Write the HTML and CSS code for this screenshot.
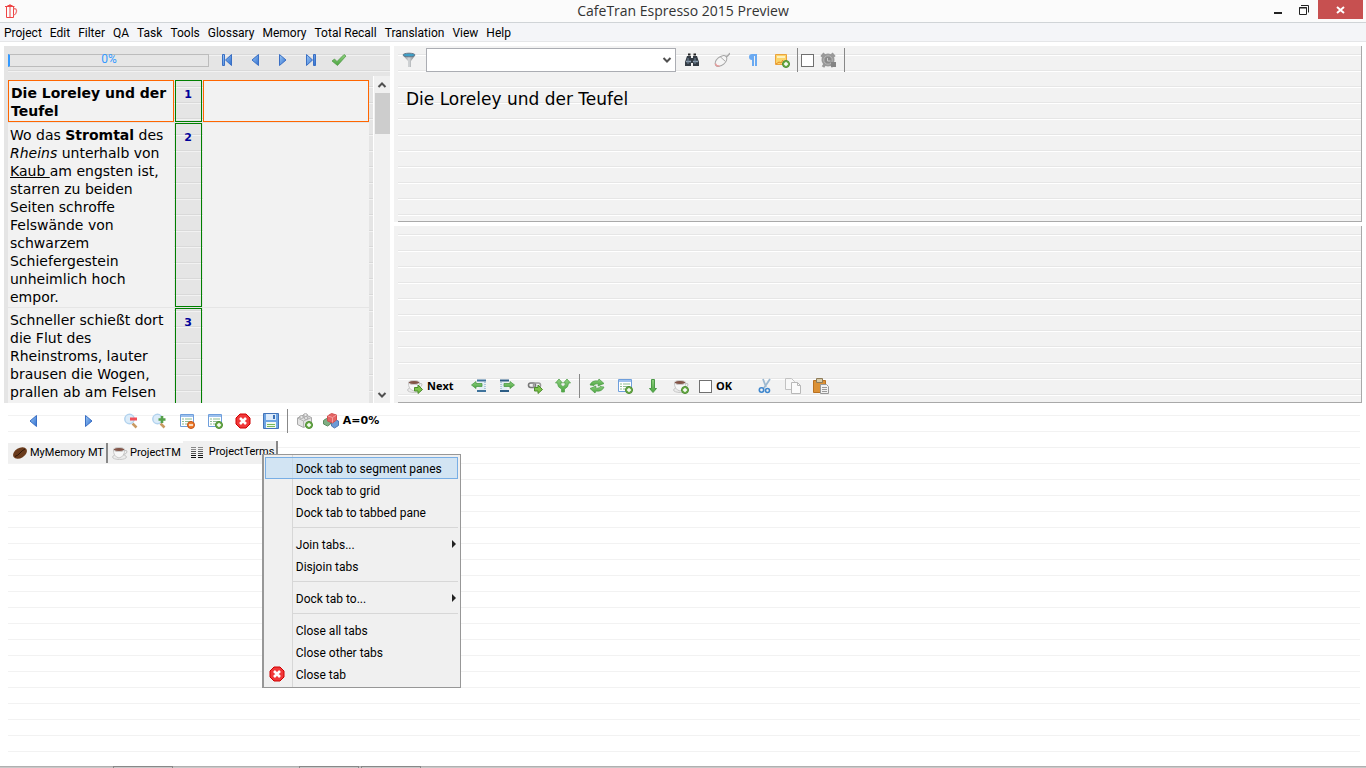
FILE: index.html
```
<!DOCTYPE html>
<html lang="en">
    <head>
        <meta charset="utf-8">
        <title>CafeTran Espresso 2015 Preview</title>
        <link rel="stylesheet" href="styles.css">
    </head>
    <body>
        <svg class="sprite" aria-hidden="true">
            <defs>
                <linearGradient id="blue" x1="0" x2="1" y1="0" y2="1">
                    <stop offset="0" stop-color="#9cc8f5"/>
                    <stop offset="1" stop-color="#2f6fd0"/>
                </linearGradient>
                <linearGradient id="green" x1="0" x2="0" y1="0" y2="1">
                    <stop offset="0" stop-color="#8ed07f"/>
                    <stop offset="1" stop-color="#4ba53f"/>
                </linearGradient>
                <linearGradient id="steel" x1="0" x2="1">
                    <stop offset="0" stop-color="#7b7f83"/>
                    <stop offset=".5" stop-color="#d5d8da"/>
                    <stop offset="1" stop-color="#6d7175"/>
                </linearGradient>
                <symbol id="plus" viewBox="0 0 16 16">
                    <circle cx="12" cy="12" r="3.5" fill="#6fb04c" stroke="#4a8a30"/>
                    <path d="M12 10v4M10 12h4" stroke="#fff" stroke-width="1.4"/>
                </symbol>
                <symbol id="go" viewBox="0 0 16 16">
                    <path d="M7.500 9.500h3.500V7l4.500 4.500-4.500 4v-2.500h-3.500z" fill="#7cc34a" stroke="#4b8c2b"/>
                </symbol>
                <symbol id="prev" viewBox="0 0 16 16">
                    <path d="M11.500 2.500v11L5 8z" fill="url(#blue)" stroke="#3a6fc4"/>
                </symbol>
                <symbol id="next" viewBox="0 0 16 16">
                    <path d="M4.500 2.500v11L11 8z" fill="url(#blue)" stroke="#3a6fc4"/>
                </symbol>
                <symbol id="first" viewBox="0 0 16 16">
                    <path d="M3.500 2.500h2v11h-2zM12.500 2.500v11L6.500 8z" fill="url(#blue)" stroke="#3a6fc4"/>
                </symbol>
                <symbol id="last" viewBox="0 0 16 16">
                    <path d="M10.500 2.500h2v11h-2zM3.500 2.500v11L9.500 8z" fill="url(#blue)" stroke="#3a6fc4"/>
                </symbol>
                <symbol id="check" viewBox="0 0 16 16">
                    <path d="M1 9l2.500-2 2.500 2.500L13 2.500l2 1.500-8.500 9.500z" fill="url(#green)" stroke="#4a9440" stroke-width=".7"/>
                </symbol>
                <symbol id="funnel" viewBox="0 0 16 16">
                    <path d="M2 3.500L7 9v6h3V9l4-5.500z" fill="url(#steel)"/>
                    <ellipse cx="8" cy="3" rx="6" ry="1.800" fill="#3d9fc7" stroke="#678"/>
                </symbol>
                <symbol id="binoculars" viewBox="0 0 16 16">
                    <path d="M3 4h4v2h2V4h4l2 6v4H9v-3H7v3H1v-4z" fill="#333b44"/>
                    <path d="M4 2.500h2.500M9.500 2.500H12" stroke="#222" stroke-width="2"/>
                    <path d="M2 9.500h5M9 9.500h5" stroke="#8fa2b4" stroke-width="1.500"/>
                    <path d="M4 6v6M11 6v6" stroke="#718496"/>
                </symbol>
                <symbol id="mouse" viewBox="0 0 16 16">
                    <path d="M11 5q3-.5 5-4" fill="none" stroke="#aaa" stroke-width="1.500"/>
                    <ellipse cx="7" cy="9" rx="6.800" ry="4.200" transform="rotate(-40 7 9)" fill="#f5f5f5" stroke="#a5a5a5"/>
                    <path d="M6 4.500l5.500 5" stroke="#aaa"/>
                    <path d="M1.500 11.500q.5 3 4 2.500" fill="none" stroke="#e59a9a" stroke-width="1.500"/>
                </symbol>
                <symbol id="pilcrow" viewBox="0 0 16 16">
                    <path d="M13 2H8Q5 2 5 5t3 3v6h2V4h1v10h2z" fill="#6aaaf2"/>
                </symbol>
                <symbol id="note" viewBox="0 0 16 16">
                    <path d="M1.500 2.500h11v10h-11z" fill="#fbd56b" stroke="#eba23c"/>
                    <path d="M3 4h8v2H3z" fill="#fff0bd"/>
                    <path d="M2 12l3-2 2 1 2-3" fill="none" stroke="#e58d25"/>
                    <use href="#plus"/>
                </symbol>
                <symbol id="alarm" viewBox="0 0 16 16">
                    <path d="M1.500 5l3-3.500M14.500 5l-3-3.500M3 15l2-3M13 15l-2-3" stroke="#999" stroke-width="3"/>
                    <circle cx="8" cy="8" r="6.500" fill="#999"/>
                    <circle cx="8" cy="8" r="4.200" fill="#8a8a8a" stroke="#bbb"/>
                    <path d="M7.500 6v3h3" fill="none" stroke="#ccc"/>
                    <path d="M11 10h5v5h-5z" fill="#858585"/>
                </symbol>
                <symbol id="cup" viewBox="0 0 16 16">
                    <ellipse cx="7.500" cy="12" rx="7" ry="2.500" fill="#ececec" stroke="#c8c8c8"/>
                    <path d="M1.500 4.500h11q.5 7-5.500 8.500-6-1.500-5.500-8.500z" fill="#f7f7f7" stroke="#c8c8c8"/>
                    <path d="M12.500 5.500q3-.5 2.500 1.500t-3.500 2.500" fill="none" stroke="#c0c0c0"/>
                    <ellipse cx="7" cy="4.500" rx="5.500" ry="2" fill="#835548" stroke="#d0d0d0"/>
                </symbol>
                <symbol id="cup-go" viewBox="0 0 16 16">
                    <use href="#cup"/>
                    <use href="#go"/>
                </symbol>
                <symbol id="cup-add" viewBox="0 0 16 16">
                    <use href="#cup"/>
                    <use href="#plus"/>
                </symbol>
                <symbol id="doc-left" viewBox="0 0 16 16">
                    <path d="M6 2.500h9M6 13h9" stroke="#3f739c" stroke-width="2"/>
                    <path d="M8 4h6v8H8z" fill="#e4eef5"/>
                    <path d="M14 4v8" stroke="#6f9fc0" stroke-dasharray="1 1"/>
                    <path d="M.5 7L5 3.500v2h6v3H5v2z" fill="url(#green)" stroke="#4c9a47" stroke-width=".8"/>
                </symbol>
                <symbol id="doc-right" viewBox="0 0 16 16">
                    <path d="M1 2.500h9M1 13h9" stroke="#2d5d85" stroke-width="2"/>
                    <path d="M2 4h6v8H2z" fill="#e4eef5"/>
                    <path d="M2 4v8" stroke="#6f9fc0" stroke-dasharray="1 1"/>
                    <path d="M15.500 7L11 3.500v2H5v3h6v2z" fill="url(#green)" stroke="#4c9a47" stroke-width=".8"/>
                </symbol>
                <symbol id="link" viewBox="0 0 16 16">
                    <rect x="1.500" y="5" width="7" height="4.500" rx="2.200" fill="none" stroke="#777" stroke-width="1.600"/>
                    <rect x="6.500" y="5" width="7" height="4.500" rx="2.200" fill="none" stroke="#999" stroke-width="1.600"/>
                    <use href="#go"/>
                </symbol>
                <symbol id="fork" viewBox="0 0 16 16">
                    <path d="M.5 5L4 1l3.500 4h-2q0 3 2.500 3.500Q10.500 8 10.500 5h-2L12 1l3.500 4h-2q0 4.500-4 6v3h-3v-3q-4-1.500-4-6z" fill="url(#green)" stroke="#58a552" stroke-width=".8"/>
                </symbol>
                <symbol id="refresh" viewBox="0 0 16 16">
                    <path d="M1 7q2-5 8-4l1-2 5 4.500L9 8l.5-2Q6 5 5 7.500z" fill="url(#green)" stroke="#4b9946" stroke-width=".7"/>
                    <path d="M15 9q-2 5-8 4l-1 2-5-4.500L7 8l-.5 2q3.500 1 4.500-1.500z" fill="url(#green)" stroke="#4b9946" stroke-width=".7"/>
                </symbol>
                <symbol id="table" viewBox="0 0 16 16">
                    <path d="M1.500 1.500h13v12h-13z" fill="#fff" stroke="#6f9fdc"/>
                    <path d="M2 3h12" stroke="#9cc0ed" stroke-width="2"/>
                    <path d="M3 6h2M6 6h7M3 8.500h2M6 8.500h7M3 11h2M6 11h6" stroke="#8dbd91"/>
                </symbol>
                <symbol id="table-add" viewBox="0 0 16 16">
                    <use href="#table"/>
                    <use href="#plus"/>
                </symbol>
                <symbol id="table-del" viewBox="0 0 16 16">
                    <use href="#table"/>
                    <circle cx="12" cy="12" r="3.500" fill="#ef7d2b" stroke="#c3521a"/>
                    <path d="M10 12h4" stroke="#fff" stroke-width="1.400"/>
                </symbol>
                <symbol id="down" viewBox="0 0 16 16">
                    <path d="M6.500 1.500h3v9h2l-3.500 4-3.500-4h2z" fill="url(#green)" stroke="#4b9946"/>
                </symbol>
                <symbol id="cut" viewBox="0 0 16 16">
                    <path d="M6 1l3 8M13 1L7 10" stroke="#9cb8d0" stroke-width="1.800"/>
                    <circle cx="4.500" cy="12" r="2.200" fill="none" stroke="#3f87ce" stroke-width="1.600"/>
                    <circle cx="10.500" cy="12.500" r="2" fill="none" stroke="#3f87ce" stroke-width="1.600"/>
                </symbol>
                <symbol id="copy" viewBox="0 0 16 16">
                    <path d="M.5.5h6l3 3v8h-9z" fill="#f8f8f8" stroke="#c2c2c2"/>
                    <path d="M6.500 4.500h6l3 3v8h-9z" fill="#fbfbfb" stroke="#b8b8b8"/>
                    <path d="M12.500 4.500v3h3" fill="none" stroke="#b8b8b8"/>
                </symbol>
                <symbol id="paste" viewBox="0 0 16 16">
                    <path d="M.5 2.500h12v12H.5z" fill="#db9136" stroke="#b97121"/>
                    <path d="M3.500.5h6v4h-6z" fill="#d8cba8" stroke="#8e7b58"/>
                    <path d="M7.500 6.500h6l2 2v7h-8z" fill="#f2f2f2" stroke="#999"/>
                    <path d="M9 9.500h5M9 11.500h5M9 13.500h5" stroke="#999"/>
                </symbol>
                <symbol id="lens" viewBox="0 0 16 16">
                    <path d="M9.500 10.500l4 4" stroke="#c99a62" stroke-width="2.500"/>
                    <circle cx="6.500" cy="6" r="4.700" fill="#dcecf9" stroke="#b3d3ee" stroke-width="1.500"/>
                </symbol>
                <symbol id="zoom-out" viewBox="0 0 16 16">
                    <use href="#lens"/>
                    <path d="M7 6h7" stroke="#f0505a" stroke-width="3"/>
                </symbol>
                <symbol id="zoom-in" viewBox="0 0 16 16">
                    <use href="#lens"/>
                    <path d="M7.500 6.500h7M11 3v7" stroke="#55a04a" stroke-width="2.600"/>
                </symbol>
                <symbol id="close" viewBox="0 0 16 16">
                    <path d="M5 1h6l4 4v6l-4 4H5l-4-4V5z" fill="#f0383a" stroke="#d00000"/>
                    <path d="M5 5l6 6M11 5l-6 6" stroke="#fff" stroke-width="2.600"/>
                </symbol>
                <symbol id="save" viewBox="0 0 16 16">
                    <path d="M.5.5h15v15H.5z" fill="#6ea5e4" stroke="#4474b8"/>
                    <path d="M3 1h10v6H3z" fill="#dcebfb"/>
                    <path d="M10 2h2v4h-2z" fill="#3d70b4"/>
                    <path d="M3 9h10v6H3z" fill="#f2f8ef"/>
                    <path d="M4 11.500h8M4 13.500h8" stroke="#77b85a"/>
                </symbol>
                <symbol id="brick" viewBox="0 0 16 16">
                    <path d="M.5 5l7-3.500 7 3v6L6.500 14.500l-6-3z" fill="#e4e4e4" stroke="#a8a8a8"/>
                    <path d="M.5 5l6 3 8-3.500M6.500 8v6.500" fill="none" stroke="#b4b4b4"/>
                    <ellipse cx="4.500" cy="4" rx="2" ry="1.300" fill="#f8f8f8" stroke="#a5a5a5"/>
                    <ellipse cx="9" cy="5" rx="2" ry="1.300" fill="#f8f8f8" stroke="#a5a5a5"/>
                    <ellipse cx="8.500" cy="2" rx="2" ry="1.300" fill="#f8f8f8" stroke="#a5a5a5"/>
                    <use href="#plus"/>
                </symbol>
                <symbol id="cubes" viewBox="0 0 16 16">
                    <path d="M.5 7.500l3-2 4 1.500v4l-3 2-4-2z" fill="#7fae83" stroke="#5b8a60"/>
                    <path d="M8.500 8.500l3-2 4 1.500v4.500l-4 2.500-3-2z" fill="#6e9bd6" stroke="#4f7ab5"/>
                    <path d="M4.500 3l4-2.500 5 1.500v5l-4 3-5-2z" fill="#e56565" stroke="#d05050"/>
                    <path d="M5 3l4.500 1.500v5M9.500 4.500l4-2.500" fill="none" stroke="#f3a0a0"/>
                </symbol>
                <symbol id="bean" viewBox="0 0 16 16">
                    <ellipse cx="8" cy="8" rx="7.500" ry="5" transform="rotate(-32 8 8)" fill="#6a3b1c"/>
                    <path d="M3 11.500q3-1 5-3.500t5-4" fill="none" stroke="#2f1607"/>
                </symbol>
                <symbol id="columns" viewBox="0 0 16 16">
                    <path d="M2 3.500h5M9 3.500h5M2 5.500h5M9 5.500h5" stroke="#888"/>
                    <path d="M2 7.500h5M9 7.500h5M2 9.500h5M9 9.500h5" stroke="#555"/>
                    <path d="M2 11.500h5M9 11.500h5M2 13.500h5M9 13.500h5" stroke="#111"/>
                </symbol>
                <symbol id="pot" viewBox="0 0 16 16">
                    <path d="M2 3.500h9.500M3.500 4v10.500h7V4M7 1v13M4.500 2.500h5" fill="none" stroke="#ee4444"/>
                    <path d="M10.500 5.500q3.500 0 3 3t-3 3.500" fill="none" stroke="#ee7777" stroke-width="1.300"/>
                </symbol>
                <symbol id="chevron" viewBox="0 0 16 16">
                    <path d="M4.500 6L8 9.500 11.500 6" fill="none" stroke="#505050" stroke-width="2"/>
                </symbol>
            </defs>
        </svg>

        <header class="titlebar">
            <svg class="icon logo"><use href="#pot"/></svg>
            <h1>CafeTran Espresso 2015 Preview</h1>
            <div class="window-buttons">
                <button class="win" aria-label="Minimize">
                    <svg class="icon"><path d="M3 11h8" stroke="#222" stroke-width="2"/></svg>
                </button>
                <button class="win" aria-label="Restore">
                    <svg class="icon"><path d="M2.500 5.500h7v7h-7zM2 6h8M4 3.500h7.500v7" fill="none" stroke="#222"/></svg>
                </button>
                <button class="win win-close" aria-label="Close">
                    <svg class="icon"><path d="M5 5l7 6M12 5l-7 6" stroke="#fff" stroke-width="2"/></svg>
                </button>
            </div>
        </header>

        <nav class="menubar">
            <button>Project</button>
            <button>Edit</button>
            <button>Filter</button>
            <button>QA</button>
            <button>Task</button>
            <button>Tools</button>
            <button>Glossary</button>
            <button>Memory</button>
            <button>Total Recall</button>
            <button>Translation</button>
            <button>View</button>
            <button>Help</button>
        </nav>

        <main class="workspace">
            <div class="editor">
                <section class="pane pane-grid">
                    <div class="toolbar">
                        <div class="progress" role="progressbar" aria-valuenow="0">0%</div>
                        <button class="tool" aria-label="First segment"><svg class="icon"><use href="#first"/></svg></button>
                        <button class="tool" aria-label="Previous segment"><svg class="icon"><use href="#prev"/></svg></button>
                        <button class="tool" aria-label="Next segment"><svg class="icon"><use href="#next"/></svg></button>
                        <button class="tool" aria-label="Last segment"><svg class="icon"><use href="#last"/></svg></button>
                        <button class="tool" aria-label="Finish"><svg class="icon"><use href="#check"/></svg></button>
                    </div>
                    <div class="segments">
                        <div class="segments-view">
                            <table>
                                <tr class="current">
                                    <td class="source"><b>Die Loreley und der Teufel</b></td>
                                    <th class="number">1</th>
                                    <td class="target"></td>
                                </tr>
                                <tr>
                                    <td class="source">Wo das <b>Stromtal</b> des <i>Rheins</i> unterhalb von <u>Kaub </u>am engsten ist, starren zu beiden Seiten schroffe Felswände von schwarzem Schiefergestein unheimlich hoch empor.</td>
                                    <th class="number">2</th>
                                    <td class="target"></td>
                                </tr>
                                <tr class="last">
                                    <td class="source">Schneller schießt dort die Flut des Rheinstroms, lauter brausen die Wogen, prallen ab am Felsen</td>
                                    <th class="number">3</th>
                                    <td class="target"></td>
                                </tr>
                            </table>
                        </div>
                        <div class="scrollbar">
                            <svg class="icon flip"><use href="#chevron"/></svg>
                            <div class="thumb"></div>
                            <svg class="icon"><use href="#chevron"/></svg>
                        </div>
                    </div>
                </section>

                <div class="segment-panes">
                    <section class="pane pane-segment pane-source">
                        <div class="toolbar">
                            <button class="tool" aria-label="Filter"><svg class="icon"><use href="#funnel"/></svg></button>
                            <div class="combo">
                                <select aria-label="Search text"><option></option></select>
                                <svg class="icon combo-arrow"><use href="#chevron"/></svg>
                            </div>
                            <button class="tool tool-wide" aria-label="Find"><svg class="icon"><use href="#binoculars"/></svg></button>
                            <button class="tool tool-wide" aria-label="Clear"><svg class="icon"><use href="#mouse"/></svg></button>
                            <button class="tool tool-wide" aria-label="Show marks"><svg class="icon"><use href="#pilcrow"/></svg></button>
                            <button class="tool tool-wide" aria-label="Add note"><svg class="icon"><use href="#note"/></svg></button>
                            <span class="divider"></span>
                            <label class="tick"><input type="checkbox" aria-label="Timer"></label>
                            <button class="tool" aria-label="Timer settings"><svg class="icon"><use href="#alarm"/></svg></button>
                            <span class="divider"></span>
                        </div>
                        <p class="source-text">Die Loreley und der Teufel</p>
                    </section>

                    <section class="pane pane-segment pane-target">
                        <div class="toolbar">
                            <button class="tool tool-next"><svg class="icon"><use href="#cup-go"/></svg>Next</button>
                            <button class="tool" aria-label="Source to left"><svg class="icon"><use href="#doc-left"/></svg></button>
                            <button class="tool" aria-label="Source to right"><svg class="icon"><use href="#doc-right"/></svg></button>
                            <button class="tool" aria-label="Join"><svg class="icon"><use href="#link"/></svg></button>
                            <button class="tool" aria-label="Split"><svg class="icon"><use href="#fork"/></svg></button>
                            <span class="divider"></span>
                            <button class="tool" aria-label="Refresh"><svg class="icon"><use href="#refresh"/></svg></button>
                            <button class="tool" aria-label="Add term"><svg class="icon"><use href="#table-add"/></svg></button>
                            <button class="tool" aria-label="Transfer"><svg class="icon"><use href="#down"/></svg></button>
                            <button class="tool" aria-label="Add to memory"><svg class="icon"><use href="#cup-add"/></svg></button>
                            <label class="tick tick-ok"><input type="checkbox">OK</label>
                            <button class="tool" aria-label="Cut"><svg class="icon"><use href="#cut"/></svg></button>
                            <button class="tool" aria-label="Copy"><svg class="icon"><use href="#copy"/></svg></button>
                            <button class="tool" aria-label="Paste"><svg class="icon"><use href="#paste"/></svg></button>
                        </div>
                    </section>
                </div>
            </div>

            <section class="resources">
                <div class="toolbar">
                    <button class="tool tool-step" aria-label="Previous"><svg class="icon"><use href="#prev"/></svg></button>
                    <button class="tool tool-step" aria-label="Next"><svg class="icon"><use href="#next"/></svg></button>
                    <button class="tool" aria-label="Zoom out"><svg class="icon"><use href="#zoom-out"/></svg></button>
                    <button class="tool" aria-label="Zoom in"><svg class="icon"><use href="#zoom-in"/></svg></button>
                    <button class="tool" aria-label="Remove entry"><svg class="icon"><use href="#table-del"/></svg></button>
                    <button class="tool" aria-label="Add entry"><svg class="icon"><use href="#table-add"/></svg></button>
                    <button class="tool" aria-label="Close resource"><svg class="icon"><use href="#close"/></svg></button>
                    <button class="tool" aria-label="Save"><svg class="icon"><use href="#save"/></svg></button>
                    <span class="divider"></span>
                    <button class="tool" aria-label="Add fragment"><svg class="icon"><use href="#brick"/></svg></button>
                    <button class="tool tool-auto"><svg class="icon"><use href="#cubes"/></svg>A=0%</button>
                </div>
                <div class="tabs">
                    <button class="tab tab-edge"><svg class="icon"><use href="#bean"/></svg>MyMemory MT</button>
                    <button class="tab"><svg class="icon"><use href="#cup"/></svg>ProjectTM</button>
                    <div class="tab-active">
                        <button class="tab tab-edge"><svg class="icon"><use href="#columns"/></svg>ProjectTerms</button>
                        <div class="context-menu">
                            <button class="selected">Dock tab to segment panes</button>
                            <button>Dock tab to grid</button>
                            <button>Dock tab to tabbed pane</button>
                            <hr>
                            <button class="submenu">Join tabs...</button>
                            <button>Disjoin tabs</button>
                            <hr>
                            <button class="submenu">Dock tab to...</button>
                            <hr>
                            <button>Close all tabs</button>
                            <button>Close other tabs</button>
                            <button><svg class="icon menu-icon"><use href="#close"/></svg>Close tab</button>
                        </div>
                    </div>
                </div>
            </section>
        </main>

        <footer class="taskbar">
            <span></span>
            <span></span>
            <span></span>
        </footer>
    </body>
</html>
```
FILE: styles.css
```
* {
    box-sizing: border-box;
}

body {
    margin: 0;
    height: 100vh;
    display: flex;
    flex-direction: column;
    overflow: hidden;
    background: #fff;
    color: #000;
    font: 12px/16px Roboto, sans-serif;
}

button {
    padding: 0;
    border: 0;
    background: none;
    color: inherit;
    font: inherit;
    white-space: nowrap;
}

.sprite {
    position: absolute;
    width: 0;
    height: 0;
}

.icon {
    width: 16px;
    height: 16px;
    flex: none;
}

/* title bar and menu */
.titlebar {
    height: 23px;
    padding-left: 3px;
    display: flex;
    justify-content: space-between;
    align-items: center;
    background: #fbfbfb;
    border-bottom: 1px solid #d0d4d7;
}

.titlebar h1 {
    margin: 0 auto;
    padding-left: 81px;
    font: 14px/20px "Open Sans", sans-serif;
    color: #333;
}

.window-buttons {
    display: flex;
    align-self: flex-start;
    padding-right: 3px;
}

.win {
    width: 26px;
    height: 19px;
    display: flex;
    align-items: center;
    justify-content: center;
}

.win-close {
    width: 45px;
    background: #c75050;
}

.menubar {
    height: 19px;
    padding: 1px 4px 0;
    display: flex;
    gap: 8px;
    background: #f4f5f8;
    border-bottom: 1px solid #e5e6e8;
}

/* work area */
.workspace {
    flex: 1;
    min-height: 0;
    display: grid;
    grid-template-rows: minmax(0, 357fr) minmax(0, 363fr);
    padding-top: 4px;
}

.editor {
    display: grid;
    grid-template-columns: minmax(0, 386fr) minmax(0, 968fr);
    gap: 4px;
    padding: 0 4px;
}

.segment-panes {
    display: grid;
    grid-template-rows: minmax(0, 176fr) minmax(0, 177fr);
    gap: 4px;
}

.pane {
    display: flex;
    flex-direction: column;
    min-height: 0;
    border-left: 4px solid #f2f2f2;
    background: #f2f2f2 linear-gradient(transparent 8px, #e6e6e6 8px, #e6e6e6 9px, #fff 9px, #fff 10px, transparent 10px) padding-box 0 0 / 100% 16px;
}

.pane-grid {
    border-left-color: #e5e5e5;
    background: #e5e5e5 linear-gradient(transparent 8px, #d9d9d9 8px, #d9d9d9 9px, #f2f2f2 9px, #f2f2f2 10px, transparent 10px) padding-box 0 0 / 100% 16px;
}

/* the bottom edge is a shadow, a border would be mitred into the left one */
.pane-segment {
    border-right: 1px solid #a9a9a9;
    box-shadow: inset 0 -1px #a9a9a9, -4px 0 0 -4px #a9a9a9;
}

.pane-target {
    justify-content: flex-end;
}

.toolbar {
    height: 28px;
    margin-bottom: 2px;
    flex: none;
    display: flex;
    align-items: center;
}

.pane-source .toolbar {
    margin-left: -3px;
}

.pane-target .toolbar {
    margin-bottom: 3px;
    padding-left: 9px;
}

.tool {
    width: 28px;
    height: 24px;
    display: flex;
    align-items: center;
    justify-content: center;
    gap: 4px;
    font: bold 11px/16px "Open Sans", sans-serif;
}

.tool-wide {
    width: 30px;
}

.tool-next {
    width: 58px;
    justify-content: flex-start;
}

.tool-step {
    width: 56px;
}

.tool-auto {
    width: 64px;
    font-family: "DejaVu Sans", sans-serif;
}

.divider {
    width: 1px;
    height: 24px;
    margin: 0 3px 0 2px;
    background: #888;
}

.tool-wide + .divider {
    margin-left: 0;
}

.tick {
    display: flex;
    align-items: center;
    gap: 4px;
    font: bold 11px/16px "Open Sans", sans-serif;
}

.tick input {
    appearance: none;
    width: 13px;
    height: 13px;
    margin: 0;
    border: 1px solid #707070;
    background: #fff;
}

.tick-ok {
    width: 56px;
    padding-left: 4px;
}

.progress {
    width: 201px;
    height: 13px;
    margin-right: 4px;
    border: 1px solid #bcbcbc;
    border-left: 2px solid #3399ff;
    background: #e6e6e6;
    color: #3399ff;
    font-size: 12px;
    line-height: 9px;
    text-align: center;
}

.combo {
    position: relative;
    margin: 0 1px 0 3px;
}

.combo select {
    display: block;
    width: 250px;
    height: 24px;
    appearance: none;
    border: 1px solid #abadb3;
    border-radius: 0;
    background: #fff;
}

.combo-arrow {
    position: absolute;
    right: 1px;
    top: 4px;
}

.source-text {
    margin: 12px 8px;
    font: 17px/22px "DejaVu Sans", sans-serif;
}

/* segment grid */
.segments {
    flex: 1;
    min-height: 0;
    display: flex;
}

.segments-view {
    flex: 1;
    min-width: 0;
    overflow: hidden;
    padding: 3px 4px 0 0;
}

.segments table {
    width: calc(100% + 2px);
    margin: 0 -1px;
    table-layout: fixed;
    border-spacing: 1px;
    font: 14px/18px "DejaVu Sans", sans-serif;
}

.segments td {
    padding: 3px 2px 1px;
    vertical-align: top;
    background: #f2f2f2;
}

.segments .number {
    width: 27px;
    padding: 5px 1px 0 0;
    vertical-align: top;
    border: 1px solid #007f00;
    color: #000099;
    font-size: 11px;
}

.segments .current td {
    border: 1px solid #ff6600;
}

.segments .last td {
    padding-bottom: 20px;
}

.scrollbar {
    width: 17px;
    padding-top: 1px;
    display: flex;
    flex-direction: column;
    align-items: center;
    background: #f0f0f0;
    border-left: 1px solid #fff;
}

.thumb {
    width: 15px;
    height: 41px;
    margin-bottom: auto;
    background: #cdcdcd;
}

.flip {
    transform: rotate(180deg);
}

/* bottom tabs */
.resources {
    margin: 0 6px 0 8px;
    background: linear-gradient(transparent 12px, #f2f2f2 12px, #f2f2f2 13px, transparent 13px) 0 0 / 100% 16px;
}

.resources .toolbar {
    height: 36px;
    margin-left: -3px;
}

.tabs {
    display: flex;
    align-items: center;
}

.tab {
    height: 20px;
    padding: 1px 2px 0 4px;
    display: flex;
    align-items: center;
    gap: 2px;
    background: #f0f0f0;
    font-size: 11px;
}

.tab-edge {
    border-right: 2px solid #888;
}

.tab-active {
    position: relative;
}

.tab-active .tab {
    height: 23px;
    padding: 0 2px 2px 6px;
    gap: 4px;
}

.context-menu {
    position: absolute;
    left: 79px;
    top: 13px;
    width: 199px;
    padding: 2px 2px 2px 1px;
    background: #f0f0f0 linear-gradient(#d7d7d7, #d7d7d7) no-repeat 28px 0 / 1px 100%;
    border: 1px solid #979797;
    border-left-width: 2px;
}

.context-menu button {
    position: relative;
    display: block;
    width: 100%;
    height: 22px;
    padding: 2px 0 0 30px;
    border: 1px solid transparent;
    text-align: left;
}

.context-menu .selected {
    border-color: #78aee5;
    background: rgba(190, 220, 245, 0.6);
}

.context-menu hr {
    height: 1px;
    margin: 4px 0 5px 28px;
    border: 0;
    background: #d7d7d7;
}

.context-menu .submenu::after {
    content: "";
    position: absolute;
    right: 1px;
    top: 6px;
    border: 4px solid transparent;
    border-left-color: #222;
    border-right-width: 0;
}

.menu-icon {
    position: absolute;
    left: 3px;
    top: 2px;
}

/* strip along the lower edge */
.taskbar {
    height: 2px;
    flex: none;
    display: flex;
    gap: 2px;
    padding-left: 113px;
    background: #c8c8c8;
    border-top: 1px solid #b0b0b0;
}

.taskbar span {
    width: 60px;
    margin-top: -1px;
    border: 1px solid #888;
    border-bottom: 0;
}

.taskbar span:first-child {
    margin-right: 124px;
}
```
